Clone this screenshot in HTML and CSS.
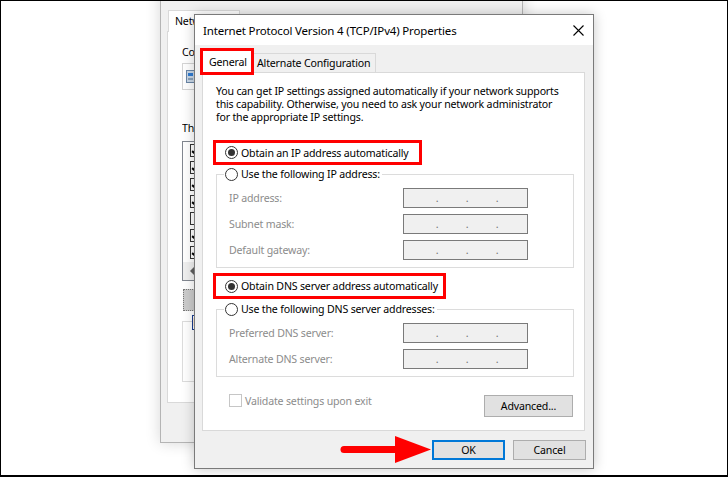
FILE: index.html
```html
<!DOCTYPE html>
<html>
<head>
<meta charset="utf-8">
<title>Internet Protocol Version 4 (TCP/IPv4) Properties</title>
<link rel="stylesheet" href="styles.css">
</head>
<body>
<div class="frame">
  <div class="desktop">

    <div class="win-back">
      <div class="bw-tabs"><div class="bw-tab"><span class="bw-clip bw-clip-tab">Networking</span></div></div>
      <div class="bw-panel">
        <div class="bw-label bw-first"><span class="bw-clip">Connect using:</span></div>
        <div class="bw-adapter">
          <svg class="bw-icon" width="9" height="13" viewBox="0 0 9 13"><rect x="0.5" y="0.5" width="8" height="12" fill="#c9d7e6" stroke="#6a86a6"/><rect x="2" y="3" width="5" height="3" fill="#2f7bd1"/><rect x="2" y="8" width="5" height="2" fill="#8aa1b8"/></svg>
        </div>
        <div class="bw-label bw-items"><span class="bw-clip">This connection uses the following items:</span></div>
        <div class="bw-list">
          <div class="bw-row"><span class="bw-check on"></span></div>
          <div class="bw-row"><span class="bw-check on"></span></div>
          <div class="bw-row"><span class="bw-check on"></span></div>
          <div class="bw-row"><span class="bw-check on"></span></div>
          <div class="bw-row"><span class="bw-check"></span></div>
          <div class="bw-row"><span class="bw-check on"></span></div>
          <div class="bw-row"><span class="bw-check on"></span></div>
          <div class="bw-scroll"><span class="bw-arrow"></span></div>
        </div>
        <div class="bw-btn"></div>
        <div class="bw-group"><span class="bw-legend"><span class="bw-clip bw-clip-legend">Description</span></span></div>
      </div>
    </div>

    <div class="dialog">
      <div class="titlebar">
        <span class="title">Internet Protocol Version 4 (TCP/IPv4) Properties</span>
        <span class="close"><svg width="11" height="11" viewBox="0 0 11 11"><path d="M0.5 0.5 L10.5 10.5 M10.5 0.5 L0.5 10.5" stroke="#000" stroke-width="1.1" fill="none"/></svg></span>
      </div>
      <div class="tabs">
        <div class="tab tab-general">General</div>
        <div class="tab tab-alt">Alternate Configuration</div>
      </div>
      <div class="panel">
        <p class="intro">You can get IP settings assigned automatically if your network supports<br>this capability. Otherwise, you need to ask your network administrator<br>for the appropriate IP settings.</p>

        <div class="red-opt red-ip"><span class="radio on"></span><span class="opt-text">Obtain an IP address automatically</span></div>

        <fieldset class="group">
          <legend class="legend"><span class="radio"></span><span class="opt-text">Use the following IP address:</span></legend>
          <div class="field"><span class="dim">IP address:</span><span class="ipbox"><i>.</i><i>.</i><i>.</i></span></div>
          <div class="field"><span class="dim">Subnet mask:</span><span class="ipbox"><i>.</i><i>.</i><i>.</i></span></div>
          <div class="field"><span class="dim">Default gateway:</span><span class="ipbox"><i>.</i><i>.</i><i>.</i></span></div>
        </fieldset>

        <div class="red-opt red-dns"><span class="radio on"></span><span class="opt-text">Obtain DNS server address automatically</span></div>

        <fieldset class="group group-dns">
          <legend class="legend"><span class="radio"></span><span class="opt-text">Use the following DNS server addresses:</span></legend>
          <div class="field"><span class="dim">Preferred DNS server:</span><span class="ipbox"><i>.</i><i>.</i><i>.</i></span></div>
          <div class="field"><span class="dim">Alternate DNS server:</span><span class="ipbox"><i>.</i><i>.</i><i>.</i></span></div>
        </fieldset>

        <div class="check-row">
          <label class="validate"><span class="checkbox"></span><span class="dim">Validate settings upon exit</span></label>
          <span class="btn btn-adv">Advanced...</span>
        </div>
      </div>
      <div class="footer">
        <span class="btn btn-ok">OK</span>
        <span class="btn btn-cancel">Cancel</span>
      </div>
    </div>

    <svg class="arrow" width="96" height="32" viewBox="0 0 96 32">
      <line x1="6" y1="15.5" x2="62" y2="15.5" stroke="#ff0000" stroke-width="7" stroke-linecap="round"/>
      <polygon points="57,2 57,29 93,15.5" fill="#ff0000"/>
    </svg>

  </div>
</div>
</body>
</html>
```
FILE: styles.css
```css
* { box-sizing: border-box; }
html, body { margin: 0; padding: 0; }
body {
  background: #fff;
  font-family: "Noto Sans", "Segoe UI", sans-serif;
  font-size: 10.6px;
  letter-spacing: -0.18px;
  color: #000;
}
.frame {
  width: 728px;
  height: 477px;
  border-style: solid;
  border-color: #000;
  border-width: 1px 1px 2px 1px;
  overflow: hidden;
  background: #fff;
}
.desktop { position: relative; width: 100%; height: 100%; }

/* ---------- background window ---------- */
.win-back {
  position: absolute;
  z-index: 1;
  left: 159px;
  top: -19px;
  width: 363px;
  height: 461px;
  background: #f0f0f0;
  border: 1px solid #b4b4b4;
  box-shadow: 0 0 14px rgba(0,0,0,0.16);
  padding: 27px 0 0 6px;
}
.bw-clip {
  display: inline-block;
  width: 12px;
  overflow: hidden;
  white-space: nowrap;
  vertical-align: top;
}
.bw-clip-tab { width: 19px; }
.bw-clip-legend { width: 2px; }
.bw-tabs { display: flex; }
.bw-tab {
  position: relative;
  z-index: 1;
  margin-left: 1px;
  width: 72px;
  height: 22px;
  background: #fff;
  border: 1px solid #d9d9d9;
  border-bottom: none;
  padding-left: 6px;
  line-height: 21px;
}
.bw-panel {
  margin-top: -1px;
  width: 349px;
  height: 372px;
  background: #fff;
  border: 1px solid #d9d9d9;
  padding-left: 14px;
}
.bw-label { line-height: 14px; height: 14px; }
.bw-first { margin-top: 13px; }
.bw-adapter {
  margin-top: 4px;
  width: 300px;
  height: 27px;
  border: 1px solid #d5d5d5;
  display: flex;
  align-items: center;
  padding-left: 3px;
}
.bw-items { margin-top: 31px; }
.bw-list {
  position: relative;
  margin-top: 6px;
  width: 320px;
  height: 140px;
  border: 1px solid #828790;
}
.bw-row {
  height: 17px;
  display: flex;
  align-items: center;
  padding-left: 7px;
}
.bw-check {
  width: 13px;
  height: 13px;
  border: 1px solid #333;
  background: #fff;
  position: relative;
}
.bw-check.on::after {
  content: "";
  position: absolute;
  left: 3px;
  top: 0px;
  width: 4px;
  height: 8px;
  border-right: 2px solid #000;
  border-bottom: 2px solid #000;
  transform: rotate(40deg);
}
.bw-scroll {
  position: absolute;
  left: 0;
  right: 0;
  bottom: 0;
  height: 18px;
  background: #f0f0f0;
  padding-left: 7px;
  display: flex;
  align-items: center;
}
.bw-arrow {
  width: 0;
  height: 0;
  border-top: 4px solid transparent;
  border-bottom: 4px solid transparent;
  border-right: 4px solid #606060;
}
.bw-btn {
  margin-top: 8px;
  margin-left: 1px;
  width: 80px;
  height: 22px;
  background: #cccccc;
  border: 1px dotted #777;
}
.bw-group {
  margin-top: 10px;
  width: 320px;
  height: 61px;
  border: 1px solid #dcdcdc;
  position: relative;
}
.bw-legend {
  position: absolute;
  left: 9px;
  top: -7px;
  background: #fff;
  color: #1a3d8f;
  line-height: 13px;
  border-left: 1px solid #1a3d8f;
  border-top: 1px solid #1a3d8f;
  border-bottom: 1px solid #1a3d8f;
}

/* ---------- dialog ---------- */
.dialog {
  position: absolute;
  z-index: 2;
  left: 193px;
  top: 13px;
  width: 400px;
  height: 455px;
  background: #f0f0f0;
  border: 1px solid #7a7a7a;
  box-shadow: 0 0 12px rgba(0,0,0,0.22);
}
.titlebar {
  height: 30px;
  background: #fff;
  display: flex;
  align-items: center;
  justify-content: space-between;
  padding-left: 8px;
}
.title { font-size: 11.5px; letter-spacing: -0.17px; white-space: nowrap; }
.close {
  width: 30px;
  height: 30px;
  display: flex;
  align-items: center;
  justify-content: center;
}
.tabs {
  height: 27px;
  display: flex;
  align-items: flex-end;
  padding-left: 7px;
}
.tab {
  position: relative;
  border: 1px solid #d9d9d9;
  border-bottom: none;
  white-space: nowrap;
}
.tab-general {
  z-index: 2;
  width: 50px;
  height: 23px;
  margin-bottom: -1px;
  background: #fff;
  padding-left: 6px;
  line-height: 22px;
  outline: 3px solid #ff0000;
  outline-offset: -1px;
}
.tab-alt {
  height: 19px;
  background: #f0f0f0;
  padding: 0 5px;
  line-height: 18px;
  border-left: none;
}
.panel {
  position: relative;
  z-index: 1;
  margin-left: 7px;
  width: 383px;
  height: 359px;
  background: #fff;
  border: 1px solid #d9d9d9;
  padding: 12px 11px 0 10px;
}
.intro {
  margin: 0 0 0 3px;
  line-height: 13px;
  white-space: nowrap;
}
.radio {
  flex: none;
  width: 13px;
  height: 13px;
  border: 1px solid #333;
  border-radius: 50%;
  background: #fff;
  display: flex;
  align-items: center;
  justify-content: center;
}
.radio.on::after {
  content: "";
  width: 7px;
  height: 7px;
  border-radius: 50%;
  background: #333;
}
.opt-text { margin-left: 3px; white-space: nowrap; }
.red-opt {
  display: flex;
  align-items: center;
  border: 3px solid #ff0000;
  padding-left: 9px;
  height: 25px;
}
.red-ip { margin-top: 16px; width: 209px; }
.red-dns { margin-top: 5px; width: 233px; height: 26px; }
.group {
  margin: 2px 0 0 3px;
  width: 358px;
  border: 1px solid #dcdcdc;
  padding: 7px 45px 7px 12px;
  min-width: 0;
}
.group-dns { margin-top: 3px; }
.legend {
  margin-left: -5px;
  padding: 0 2px 0 1px;
  display: flex;
  align-items: center;
  height: 14px;
  line-height: 14px;
}
.field {
  display: flex;
  justify-content: space-between;
  align-items: center;
  height: 20px;
}
.field + .field { margin-top: 6px; }
.dim { color: #8c8c8c; white-space: nowrap; }
.ipbox {
  width: 125px;
  height: 20px;
  background: #f0f0f0;
  border: 1px solid #7a7a7a;
  display: flex;
  padding-left: 18px;
  line-height: 18px;
  color: #707070;
}
.ipbox i {
  font-style: normal;
  width: 30px;
  text-align: center;
}
.check-row {
  margin-top: 17px;
  display: flex;
  justify-content: space-between;
  align-items: flex-start;
  padding-left: 16px;
}
.validate {
  display: flex;
  align-items: center;
  gap: 3px;
  height: 13px;
}
.checkbox {
  width: 13px;
  height: 13px;
  border: 1px solid #c6c6c6;
  background: #fff;
}
.btn {
  display: flex;
  align-items: center;
  justify-content: center;
  background: #e1e1e1;
  border: 1px solid #adadad;
  white-space: nowrap;
}
.btn-adv {
  margin-top: 1px;
  width: 89px;
  height: 22px;
}
.footer {
  display: flex;
  justify-content: flex-end;
  gap: 8px;
  padding: 9px 7px 0 0;
}
.btn-ok, .btn-cancel { width: 73px; height: 20px; }
.btn-ok { border: 2px solid #0078d7; }
.arrow {
  position: absolute;
  z-index: 3;
  left: 337px;
  top: 433px;
}
```
